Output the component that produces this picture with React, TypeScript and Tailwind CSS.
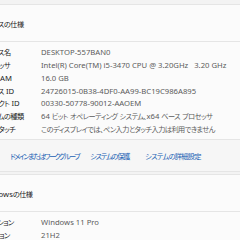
import React from "react";

const deviceSpecs: [string, string][] = [
  ["デバイス名", "DESKTOP-557BAN0"],
  ["プロセッサ", "Intel(R) Core(TM) i5-3470 CPU @ 3.20GHz   3.20 GHz"],
  ["実装 RAM", "16.0 GB"],
  ["デバイス ID", "24726015-0B38-4DF0-AA99-BC19C986A895"],
  ["プロダクト ID", "00330-50778-90012-AAOEM"],
  ["システムの種類", "64 ビット オペレーティング システム、x64 ベース プロセッサ"],
  ["ペンとタッチ", "このディスプレイでは、ペン入力とタッチ入力は利用できません"],
];

const windowsSpecs: [string, string][] = [
  ["エディション", "Windows 11 Pro"],
  ["バージョン", "21H2"],
];

const relatedLinks = [
  { label: "ドメインまたはワークグループ", cjk: "text-[7.2px] tracking-[-1.6px]", className: "" },
  { label: "システムの保護", cjk: "text-[7.2px] tracking-[-1.2px]", className: "ml-[-1px]" },
  { label: "システムの詳細設定", cjk: "text-[7.2px] tracking-[-0.7px]", className: "ml-[4px]" },
];

// Japanese runs are set a bit tighter than the Latin ones, like Yu Gothic UI next to Segoe UI
function Jp({ text, cjk = "text-[7.2px] tracking-[-0.55px]" }: { text: string; cjk?: string }) {
  const parts = text.split(/([\u3000-\u30ff\u4e00-\u9fff\uff00-\uffef]+)/);
  return (
    <>
      {parts.map((part, i) =>
        i % 2 === 1 ? (
          <span key={i} className={cjk}>
            {part}
          </span>
        ) : (
          part
        )
      )}
    </>
  );
}

function SpecRow({ label, value }: { label: string; value: string }) {
  return (
    <div className="flex h-[12.8px] items-center whitespace-nowrap">
      <span className="w-[61px] shrink-0 text-[#1b1b1b]">
        <Jp text={label} />
      </span>
      <span className="whitespace-pre text-[#5c5c5c]">
        <Jp text={value} />
      </span>
    </div>
  );
}

function CardHeader({ title }: { title: string }) {
  return (
    <div className="flex h-[37px] items-center whitespace-nowrap border-b border-[#e5e5e5] pt-[3px] text-[#1b1b1b]">
      <Jp text={title} />
    </div>
  );
}

export default function App() {
  return (
    <div
      className="h-[240px] w-[240px] overflow-hidden bg-[#f3f3f3] text-[7.7px] leading-none [font-feature-settings:'palt']"
      style={{ fontFamily: '"Noto Sans", "Noto Sans CJK JP", sans-serif' }}
    >
      <div className="-ml-[58px] w-[340px]">
        {/* previous card edge */}
        <div className="h-[4px]" />

        {/* デバイスの仕様 */}
        <div className="border-y border-[#e5e5e5] bg-[#fbfbfb] pl-[38px]">
          <CardHeader title="デバイスの仕様" />
          <div className="pb-[2.8px] pt-[4.6px]">
            {deviceSpecs.map(([label, value]) => (
              <SpecRow key={label} label={label} value={value} />
            ))}
          </div>
        </div>
        <div className="-mt-px flex h-[33px] items-center gap-[12px] whitespace-nowrap border-y border-[#e5e5e5] bg-[#f6f6f6] pl-[68px] pt-[2px]">
          {relatedLinks.map((link) => (
            <span key={link.label} className={`text-[#1a5fb4] ${link.className}`}>
              <Jp text={link.label} cjk={link.cjk} />
            </span>
          ))}
        </div>

        <div className="h-[2px]" />

        {/* Windows の仕様 */}
        <div className="border-y border-[#e5e5e5] bg-[#fbfbfb] pl-[38px]">
          <CardHeader title="Windows の仕様" />
          <div className="pb-[2.8px] pt-[4.6px]">
            {windowsSpecs.map(([label, value]) => (
              <SpecRow key={label} label={label} value={value} />
            ))}
          </div>
        </div>
      </div>
    </div>
  );
}
